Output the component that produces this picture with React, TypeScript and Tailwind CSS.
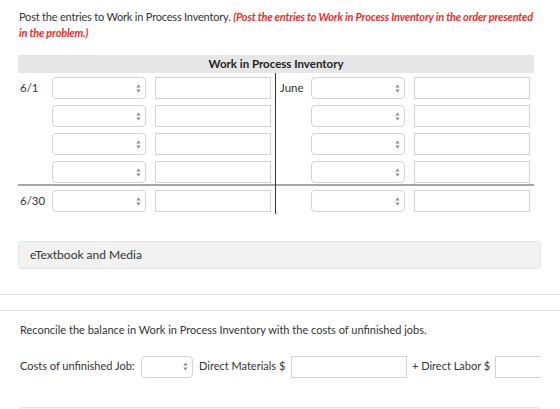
import React from "react";

function Arrows() {
  return (
    <svg width="5" height="9" viewBox="0 0 5 9" className="shrink-0">
      <path d="M2.5 0.5 L4.6 3.6 L0.4 3.6 Z" fill="#8a8a8a" />
      <path d="M2.5 8.5 L4.6 5.4 L0.4 5.4 Z" fill="#8a8a8a" />
    </svg>
  );
}

function Select({ className = "" }: { className?: string }) {
  return (
    <div
      className={`h-[22px] shrink-0 rounded-[4px] border border-[#d3d3d3] bg-white flex items-center justify-end pr-[4px] ${className}`}
    >
      <Arrows />
    </div>
  );
}

function Field({ className = "" }: { className?: string }) {
  return <div className={`h-[22px] shrink-0 border border-[#d3d3d3] bg-white ${className}`} />;
}

function Row({ label, side }: { label?: string; side: "left" | "right" }) {
  if (side === "left") {
    return (
      <div className="flex items-center h-[22px]">
        <span className="w-[34px] pl-[2px] text-[11.5px] text-[#333]">{label}</span>
        <Select className="w-[94px]" />
        <Field className="w-[116px] ml-[9px]" />
      </div>
    );
  }
  return (
    <div className="flex items-center h-[22px]">
      <span className="w-[35px] pl-[4px] text-[11.5px] text-[#333]">{label}</span>
      <Select className="w-[94px]" />
      <Field className="w-[116px] ml-[9px]" />
    </div>
  );
}

function TAccount() {
  return (
    <div className="ml-[18px] mt-[14px] w-[516px]">
      <div className="h-[18px] bg-[#e6e6e6] flex items-center justify-center text-[11.5px] font-bold text-[#222]">
        Work in Process Inventory
      </div>
      <div className="flex">
        <div className="w-[258px] border-r border-[#333]">
          <div className="flex flex-col gap-[6px] pt-[4px] pb-[1px] border-b-2 border-[#a6a6a6]">
            <Row side="left" label="6/1" />
            <Row side="left" />
            <Row side="left" />
            <Row side="left" />
          </div>
          <div className="pt-[4px] pb-[2px]">
            <Row side="left" label="6/30" />
          </div>
        </div>
        <div className="flex-1">
          <div className="flex flex-col gap-[6px] pt-[4px] pb-[1px] border-b-2 border-[#a6a6a6]">
            <Row side="right" label="June" />
            <Row side="right" />
            <Row side="right" />
            <Row side="right" />
          </div>
          <div className="pt-[4px] pb-[2px]">
            <Row side="right" />
          </div>
        </div>
      </div>
    </div>
  );
}

export default function App() {
  return (
    <div
      className="w-[560px] h-[409px] overflow-hidden bg-white text-[#333]"
      style={{ fontFamily: "Lato, 'Open Sans', sans-serif" }}
    >
      <p className="pt-[9px] pl-[19px] pr-[18px] text-[11px] tracking-[-0.2px] leading-[16px] text-[#333]">
        Post the entries to Work in Process Inventory.{" "}
        <span className="italic font-bold text-[#e8312b]">
          (Post the entries to Work in Process Inventory in the order presented in the problem.)
        </span>
      </p>

      <TAccount />

      <div className="mx-[18px] mt-[27px] w-[523px] h-[28px] rounded-[4px] border border-[#e4e4e4] bg-[#f2f2f2] flex items-center pl-[11px] text-[12px] text-[#333]">
        eTextbook and Media
      </div>

      <div className="mt-[25px] border-t border-[#e3e3e3]" />
      <div className="mt-[15px] border-t border-[#e3e3e3]" />

      <div className="pl-[20px] pt-[11px] text-[11px] text-[#333]">
        Reconcile the balance in Work in Process Inventory with the costs of unfinished jobs.
      </div>

      <div className="ml-[20px] mt-[17px] w-[521px] overflow-hidden flex items-center text-[11px] text-[#333] whitespace-nowrap">
        <span className="w-[121px] shrink-0">Costs of unfinished Job:</span>
        <Select className="w-[52px] h-[21px]" />
        <span className="ml-[6px] w-[92px] shrink-0">Direct Materials $</span>
        <Field className="w-[116px] h-[21px]" />
        <span className="ml-[5px] w-[83px] shrink-0">+ Direct Labor $</span>
        <Field className="w-[60px] h-[21px]" />
      </div>

      <div className="mx-[18px] mt-[29px] w-[523px] h-[28px] rounded-[4px] border border-[#e4e4e4] bg-[#f2f2f2]" />
    </div>
  );
}
